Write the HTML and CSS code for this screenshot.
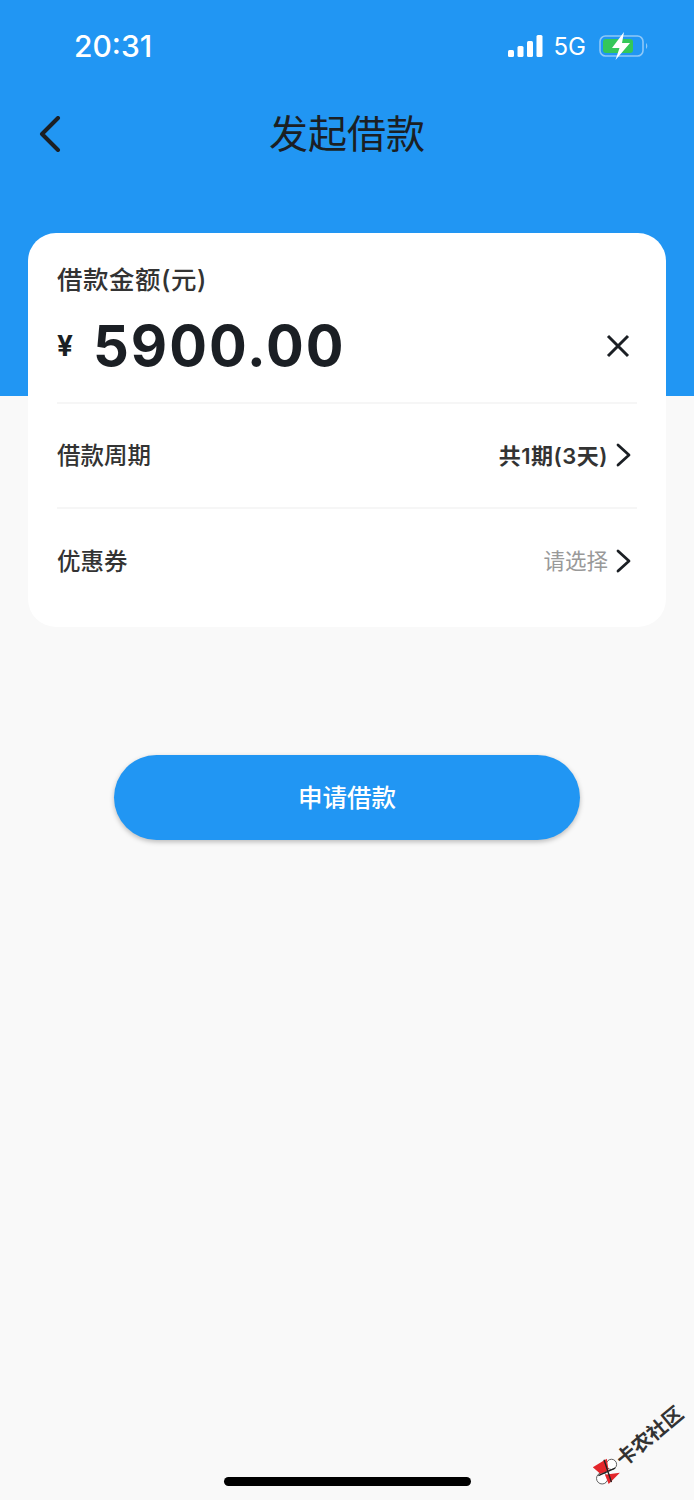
FILE: index.html
```html
<!doctype html>
<html>
<head>
<meta charset="utf-8">
<title>发起借款</title>
<link rel="stylesheet" href="styles.css">
</head>

<body>
<div class="page">
    <div class="status">
        <span class="time">20:31</span>
        <div class="status-right">
            <svg class="signal" width="35" height="22" viewBox="0 0 35 22">
                <rect x="0" y="15" width="6" height="7" rx="1.5" fill="#fff"/>
                <rect x="9.5" y="11" width="6" height="11" rx="1.5" fill="#fff"/>
                <rect x="19" y="6" width="6" height="16" rx="1.5" fill="#fff"/>
                <rect x="28.5" y="0" width="6" height="22" rx="1.5" fill="#fff"/>
            </svg>
            <span class="net">5G</span>
            <svg class="battery" width="50" height="30" viewBox="0 0 50 30">
                <rect x="1" y="5" width="43" height="20" rx="5.5" fill="none" stroke="#8ec8f8" stroke-width="1.6"/>
                <rect x="4" y="8" width="30" height="14" rx="3" fill="#34c759"/>
                <path d="M47 12 a4 4 0 0 1 0 6z" fill="#8ec8f8"/>
                <path d="M25 1 L13 17 H20.500 L16.500 29 L31 12 H23 Z" fill="#fff"/>
            </svg>
        </div>
    </div>

    <div class="nav">
        <svg class="back" width="24" height="36" viewBox="0 0 24 36">
            <path d="M20 2 L4 18 L20 34" fill="none" stroke="#1b1f24" stroke-width="4" stroke-linecap="round" stroke-linejoin="round"/>
        </svg>
        <h1 class="title">发起借款</h1>
    </div>

    <div class="card">
        <div class="amount-box">
            <div class="amount-label">借款金额(元)</div>
            <div class="amount-row">
                <span class="yen">¥</span>
                <span class="amount">5900.00</span>
                <svg class="clear" width="24" height="24" viewBox="0 0 24 24">
                    <path d="M2 2 L22 22 M22 2 L2 22" fill="none" stroke="#1b1f24" stroke-width="3"/>
                </svg>
            </div>
        </div>
        <div class="row">
            <span class="label">借款周期</span>
            <div class="row-right">
                <span class="value">共1期(3天)</span>
                <svg class="arrow" width="16" height="24" viewBox="0 0 16 24">
                    <path d="M2 2 L13 12 L2 22" fill="none" stroke="#1b1f24" stroke-width="2.800" stroke-linecap="round" stroke-linejoin="round"/>
                </svg>
            </div>
        </div>
        <div class="row last">
            <span class="label">优惠券</span>
            <div class="row-right">
                <span class="hint">请选择</span>
                <svg class="arrow" width="16" height="24" viewBox="0 0 16 24">
                    <path d="M2 2 L13 12 L2 22" fill="none" stroke="#1b1f24" stroke-width="2.800" stroke-linecap="round" stroke-linejoin="round"/>
                </svg>
            </div>
        </div>
    </div>

    <div class="btn">申请借款</div>

    <div class="home-bar"></div>

    <div class="mark">
        <svg width="28" height="28" viewBox="0 0 30 30">
            <circle cx="10" cy="23" r="6" fill="#fff" stroke="#555" stroke-width="1"/>
            <circle cx="20" cy="8" r="5.500" fill="#fff" stroke="#555" stroke-width="1"/>
            <path d="M0 11 L15 2 L17 15 L8 18 Z M13 19 L29 17 L17 29 Z" fill="#e3262b"/>
            <path d="M12 3 L20 27 M6 20 L24 12" stroke="#222" stroke-width="1.500"/>
        </svg>
        <span>卡农社区</span>
    </div>
</div>
</body>
</html>
```

FILE: styles.css
```css
html,body { padding:0; margin:0;}
body { font-family:Inter,"Noto Sans CJK SC",sans-serif; color:#333;}
.page { position:relative; width:694px; height:1500px; overflow:hidden; background:linear-gradient(#2196f3 396px,#f9f9f9 396px);}

.status { height:92px; display:flex; justify-content:space-between; align-items:center; padding:0 45px 0 74px;}
.time { font-size:30px; font-weight:500; color:#fff;}
.status-right { display:flex; align-items:center;}
.net { font-size:24px; color:#fff; margin:0 13px 0 11px;}

.nav { height:84px; display:flex; align-items:center; justify-content:center; position:relative;}
.back { position:absolute; left:38px; top:24px;}
.title { margin:0 0 1px; font-size:39px; font-weight:400; line-height:52px; color:#1b1f24;}

.card { margin:57px 28px 0; height:394px; box-sizing:border-box; padding:0 29px; background:#fff; border-radius:28px;}
.amount-label { font-size:25.500px; font-weight:500; letter-spacing:0.5px; line-height:32px; margin-bottom:2px; color:#333;}
.label { font-size:23.500px; font-weight:500; line-height:30px; color:#333;}
.amount-box { height:171px; box-sizing:border-box; padding-top:31px; border-bottom:2px solid #f6f6f6;}
.amount-row { display:flex; align-items:center; margin-top:17px; height:66px;}
.yen { width:36px; font-size:28px; font-weight:700; color:#1b1f24;}
.amount { flex:1; font-size:56px; font-weight:700; letter-spacing:2px; color:#1b1f24;}
.clear { margin-right:7px;}

.row { height:105px; box-sizing:border-box; display:flex; justify-content:space-between; align-items:center; border-bottom:2px solid #f6f6f6;}
.row.last { border-bottom:none;}
.row-right { display:flex; align-items:center; margin-bottom:2px;}
.value { font-size:22px; font-weight:600; letter-spacing:0.5px; padding-bottom:2px; color:#333;}
.hint { font-size:21.500px; padding-bottom:2px; color:#999;}
.arrow { margin-left:8px; margin-right:5px;}

.btn { width:466px; height:85px; margin:128px auto 0; border-radius:43px; background:#2196f3; color:#fff; font-size:24.500px; font-weight:500; text-align:center; line-height:87px; box-shadow:0 2px 5px rgba(0,0,0,0.25);}

.home-bar { position:absolute; left:224px; top:1477px; width:247px; height:9px; border-radius:5px; background:#000;}

.mark { position:absolute; left:583px; top:1430px; display:flex; align-items:center; gap:1px; transform:rotate(-40deg); font-size:20px; font-weight:700; color:#333; white-space:nowrap;}
.mark svg { transform:rotate(40deg);}
```
